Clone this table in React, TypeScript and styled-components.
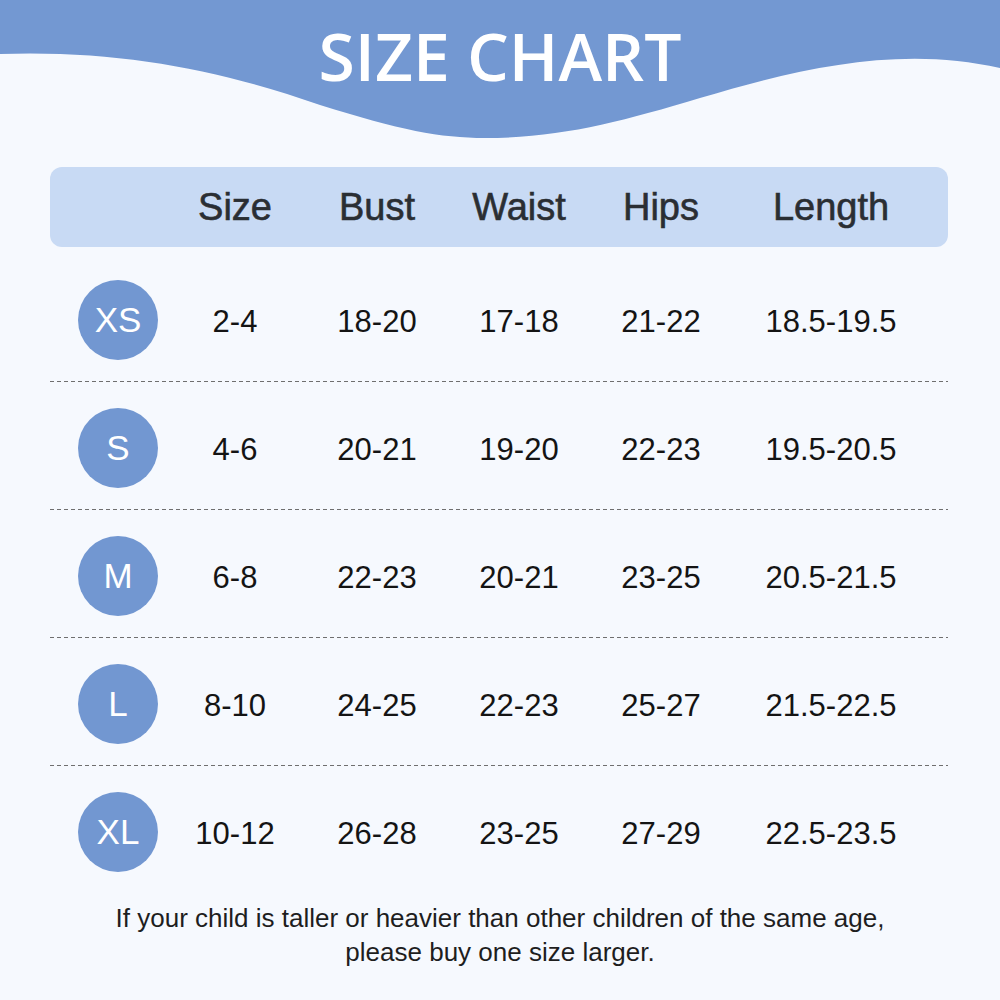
import React from "react";
import styled, { createGlobalStyle } from "styled-components";

const Global = createGlobalStyle`
  html, body { margin: 0; padding: 0; background: #f6f9fe; }
  body { width: 1000px; height: 1000px; overflow: hidden; }
`;

const Page = styled.div`
  width: 1000px;
  height: 1000px;
  background: #f6f9fe;
  display: flex;
  flex-direction: column;
  font-family: "Liberation Sans", Arial, sans-serif;
`;

const Banner = styled.header`
  position: relative;
  height: 167px;
  display: flex;
  justify-content: center;
`;

const Wave = styled.svg`
  position: absolute;
  top: 0;
  left: 0;
  width: 1000px;
  height: 150px;
`;

const Title = styled.h1`
  position: relative;
  margin: 0;
  padding-top: 22px;
  font-family: "Open Sans", sans-serif;
  font-weight: 600;
  font-size: 66px;
  line-height: 66px;
  color: #ffffff;
`;

const cols = "136px 98px 186px 98px 186px 154px";

const Table = styled.section`
  margin: 0 52px 0 50px;
  display: flex;
  flex-direction: column;
`;

const HeadBar = styled.div`
  display: grid;
  grid-template-columns: ${cols};
  height: 80px;
  align-items: center;
  background: #c8daf4;
  border-radius: 12px;
`;

const HeadCell = styled.div`
  text-align: center;
  font-size: 38px;
  color: #2a2e33;
  -webkit-text-stroke: 0.6px #2a2e33;
`;

const Body = styled.div`
  padding-top: 33px;
`;

const Row = styled.div`
  display: grid;
  grid-template-columns: ${cols};
  height: 80px;
  align-items: center;
`;

const Badge = styled.div`
  justify-self: center;
  width: 80px;
  height: 80px;
  border-radius: 50%;
  background: #7297d1;
  color: #ffffff;
  display: flex;
  align-items: center;
  justify-content: center;
  font-size: 35px;
`;

const Cell = styled.div`
  text-align: center;
  font-size: 31px;
  padding-top: 3px;
  color: #141414;
`;

const Divider = styled.div`
  height: 1px;
  margin: 21px 0 26px;
  background: repeating-linear-gradient(to right, #6f6f6f 0 4px, transparent 4px 7px);
`;

const Note = styled.p`
  margin: 29px 0 0;
  text-align: center;
  font-size: 26px;
  line-height: 34px;
  color: #1e1e1e;
`;

const headers = ["Size", "Bust", "Waist", "Hips", "Length"];
const rows: [string, string[]][] = [
  ["XS", ["2-4", "18-20", "17-18", "21-22", "18.5-19.5"]],
  ["S", ["4-6", "20-21", "19-20", "22-23", "19.5-20.5"]],
  ["M", ["6-8", "22-23", "20-21", "23-25", "20.5-21.5"]],
  ["L", ["8-10", "24-25", "22-23", "25-27", "21.5-22.5"]],
  ["XL", ["10-12", "26-28", "23-25", "27-29", "22.5-23.5"]],
];

export default function App() {
  return (
    <Page>
      <Global />
      <Banner>
        <Wave viewBox="0 0 1000 150" preserveAspectRatio="none">
          <path
            d="M0 54 C 120 50, 220 70, 320 105 C 400 130, 440 138, 485 138 C 560 138, 620 122, 700 98 C 800 68, 900 45, 1000 68 V0 H0 Z"
            fill="#7398d2"
          />
        </Wave>
        <Title>SIZE CHART</Title>
      </Banner>
      <Table>
        <HeadBar>
          <span />
          {headers.map((h) => (
            <HeadCell key={h}>{h}</HeadCell>
          ))}
        </HeadBar>
        <Body>
          {rows.map(([size, vals], i) => (
            <React.Fragment key={size}>
              <Row>
                <Badge>{size}</Badge>
                {vals.map((v, j) => (
                  <Cell key={j}>{v}</Cell>
                ))}
              </Row>
              {i < rows.length - 1 && <Divider />}
            </React.Fragment>
          ))}
        </Body>
      </Table>
      <Note>
        If your child is taller or heavier than other children of the same age,
        <br />
        please buy one size larger.
      </Note>
    </Page>
  );
}
